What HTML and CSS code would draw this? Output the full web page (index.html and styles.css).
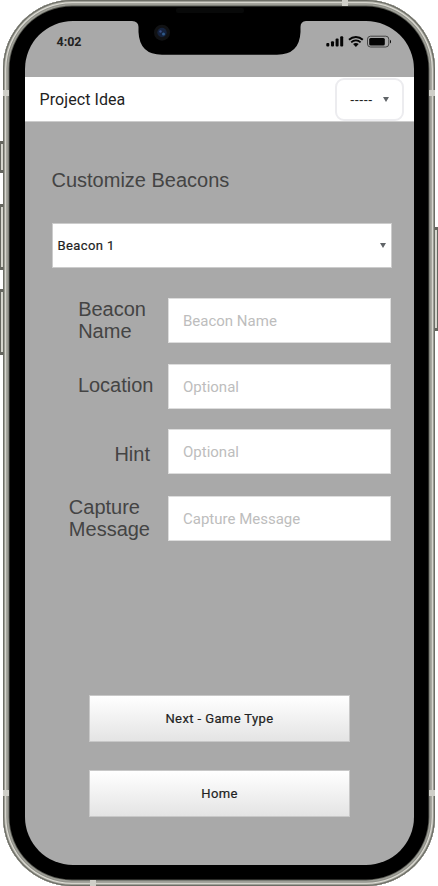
FILE: index.html
```html
<!DOCTYPE html>
<html lang="en">
<head>
<meta charset="utf-8">
<title>Project Idea</title>
<link rel="stylesheet" href="styles.css">
</head>
<body>
<div class="phone">
  <span class="key mute"></span><span class="key vol-up"></span><span class="key vol-down"></span><span class="key power"></span>
  <div class="frame">
    <main class="screen">
      <div class="status">
        <span class="time">4:02</span>
        <svg class="signals" width="66" height="14" viewBox="0 0 66 14">
          <g fill="#050505">
            <rect x="0.3" y="8" width="3" height="3.6" rx="1"/><rect x="5" y="6.2" width="3" height="5.4" rx="1"/>
            <rect x="9.6" y="3.6" width="3" height="8" rx="1"/><rect x="14.2" y="1.2" width="3" height="10.4" rx="1"/>
            <path d="M27.1 9.1a4.4 4.4 0 0 1 5.6 0L29.9 11.9z"/>
            <rect x="43.2" y="3" width="15.6" height="7.4" rx="1.5"/>
            <path d="M64 4.8v3.8c1.4-.5 1.4-3.3 0-3.8z"/>
          </g>
          <g fill="none" stroke="#050505">
            <path d="M23 4.7a10 10 0 0 1 13.8 0" stroke-width="1.9"/><path d="M25.2 7.3a6.8 6.8 0 0 1 9.4 0" stroke-width="1.8"/>
            <rect x="41.5" y="1.2" width="21.3" height="10.8" rx="3" stroke="#444"/>
          </g>
        </svg>
      </div>
      <header class="bar">
        <h1>Project Idea</h1>
        <button class="menu"><span>-----</span><i class="caret"></i></button>
      </header>
      <section class="content">
        <h2>Customize Beacons</h2>
        <button class="select"><span>Beacon 1</span><i class="caret"></i></button>
        <form class="fields">
          <label class="name" for="name">Beacon<br>Name</label><input id="name" placeholder="Beacon Name">
          <label class="location" for="location">Location</label><input id="location" placeholder="Optional">
          <label class="hint" for="hint">Hint</label><input id="hint" placeholder="Optional">
          <label class="capture" for="capture">Capture<br>Message</label><input id="capture" placeholder="Capture Message">
        </form>
        <nav class="actions"><button>Next - Game Type</button><button>Home</button></nav>
      </section>
    </main>
  </div>
  <svg class="notch" width="174" height="50" viewBox="0 0 174 50">
    <path d="M0 15H174Q168.500 15.500 168.500 21V26Q167.500 48.700 145 48.700H30Q7.500 48.700 6.500 26V21Q6.500 15.500 0 15z"/>
    <rect x="44" y="2" width="68" height="5" rx="2" fill="#080909"/>
    <circle cx="30" cy="26.700" r="8" fill="#111214"/><circle cx="30" cy="26.500" r="4.700" fill="#15223d"/>
    <circle cx="28.500" cy="25.500" r="1.200" fill="#354a80"/><circle cx="31.500" cy="28" r="1.500" fill="#305b8b"/>
  </svg>
  <span class="band top"></span><span class="band bottom"></span>
  <span class="band left high"></span><span class="band left low"></span>
  <span class="band right high"></span><span class="band right low"></span>
</div>
</body>
</html>
```
FILE: styles.css
```css
* { box-sizing: border-box; }
body { margin: 0; background: #fff; overflow: hidden; font-family: Roboto, sans-serif; }
h1, h2 { margin: 0; font-weight: 400; }
button, input { font-family: inherit; border-radius: 0; margin: 0; }

.phone { position: relative; width: 438px; height: 886px; padding: 0 3px; }
.frame {
  position: relative;
  width: 432px;
  height: 886px;
  padding: 21px 21px 21px 21.5px;
  border-radius: 69px;
  background: #000;
  box-shadow: inset 0 0 0 1.300px #6d6e66, inset 0 0 0 2.200px #b1b1a9, inset 0 0 0 3.300px #e0dfd7,
    inset 0 0 0 4.300px #92928b, inset 0 0 0 5.600px #a0a199, inset 0 0 0 6.500px #555650;
}
.screen { height: 844px; border-radius: 48px; background: #a9a9a9; overflow: hidden; }

.status { display: flex; justify-content: space-between; align-items: flex-start; height: 56px; padding: 14px 22px 0 32px; }
.time { margin-top: -1px; font-size: 12.500px; line-height: 15px; font-weight: 700; color: #222; }
.signals { display: block; }

.bar { display: flex; justify-content: space-between; align-items: center; height: 45px; padding: 0 10px 0 15px; background: #fff; border-bottom: 1px solid #ccc; }
.bar h1 { font-size: 16px; letter-spacing: 0.080px; color: #222; }
.menu { display: flex; align-items: center; justify-content: space-between; width: 69px; height: 43px; padding: 0 13px 0 14px; border: 2px solid #ececef; border-radius: 9px; background: #fff; font-size: 13.500px; font-weight: 500; letter-spacing: 0; color: #222; }
.menu span { margin-left: -1px; font-family: "Liberation Sans", sans-serif; }
.caret { width: 0; height: 0; border: 3.500px solid transparent; border-top: 5px solid #606468; border-bottom: 0; }

.content { padding: 45px 23px 0 27px; }
.content h2 { font: 20px/26px "Liberation Sans", sans-serif; color: #444; }
.select { display: flex; align-items: center; justify-content: space-between; width: 340px; height: 45px; margin-top: 30px; padding: 0 5px; border: 1px solid #ccc; background: #fff; font-size: 13px; font-weight: 400; letter-spacing: 0.400px; -webkit-text-stroke: 0.200px #222; color: #222; }

.fields { display: grid; grid-template-columns: 116.500px 223px; grid-template-rows: 66px 65px 67px 45px; margin-top: 30px; align-items: start; }
.fields label { justify-self: end; font: 20px/22px "Liberation Sans", sans-serif; color: #444; }
.fields input { width: 223px; height: 45px; padding: 0 14px; border: 1px solid #ddd; background: #fff; font-size: 15px; }
.fields input::placeholder { color: #bdbdbd; opacity: 1; }
.name { padding: 0 22px 0 0; }
.location { padding: 10px 14.500px 0 0; }
.hint { padding: 14px 18px 0 0; }
.capture { padding: 0 18px 0 0; }

.actions { display: grid; gap: 28px; width: 261px; margin: 154px 0 0 37.500px; }
.actions button { height: 47px; border: 1px solid #c8c8c8; background: linear-gradient(#fff, #e4e4e4); font-size: 13px; font-weight: 400; letter-spacing: 0.400px; -webkit-text-stroke: 0.200px #222; color: #222; }

.notch { position: absolute; left: 132px; top: 6px; }
.band { position: absolute; background: #cfcfc8; }
.band.top { left: 342px; top: 0; width: 6px; height: 6px; }
.band.bottom { left: 90px; bottom: 0; width: 6px; height: 6px; }
.band.left { left: 3px; width: 6px; height: 6px; }
.band.right { right: 3px; width: 6px; height: 6px; }
.band.high { top: 90px; }
.band.low { top: 790px; }

.key { position: absolute; width: 4px; border: solid #65665f; border-width: 3px 1px; background: #d6d6ce; }
.mute { left: 0; top: 141px; height: 32px; }
.vol-up { left: 0; top: 204px; height: 66px; }
.vol-down { left: 0; top: 289px; height: 66px; }
.power { right: 0; top: 227px; height: 104px; }
```
